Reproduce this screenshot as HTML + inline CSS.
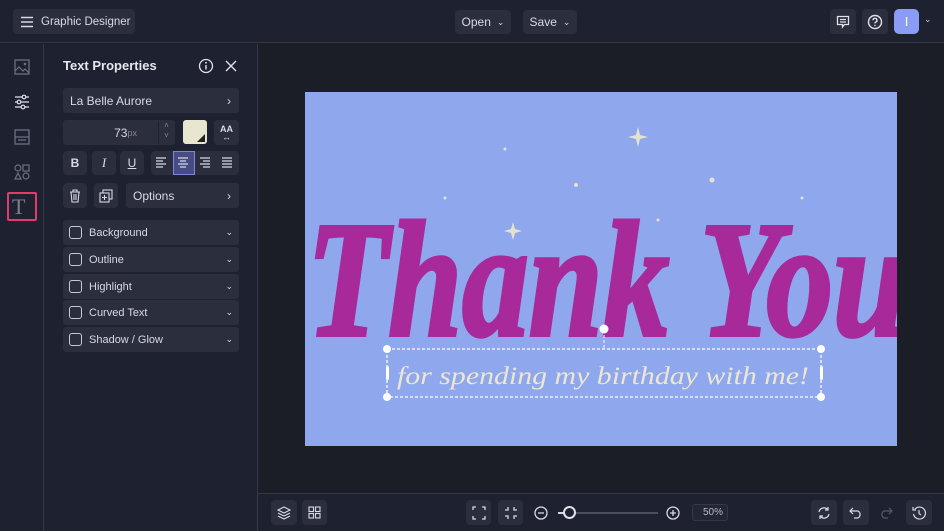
<!DOCTYPE html>
<html><head><style>
*{box-sizing:border-box;margin:0;padding:0}
body{width:944px;height:531px;background:#1b1d27;font-family:"Liberation Sans",sans-serif;color:#d8dae3;position:relative;overflow:hidden;font-size:12px;white-space:nowrap}
.abs{position:absolute}
.btn{position:absolute;background:#2a2e3d;border-radius:4px;display:flex;align-items:center;justify-content:center;color:#d8dae3}
.row{position:absolute;left:63px;width:176px;height:25px;background:#2a2e3d;border-radius:3px;display:flex;align-items:center;font-size:11px;color:#d8dae3}
.cb{width:13px;height:13px;border:1.5px solid #c8cad3;border-radius:3px;margin:0 7px 0 6px}
.chev{position:absolute;right:6px;top:7px}
</style></head><body>
<div class="abs" style="left:0;top:0;width:944px;height:43px;background:#1e2130;border-bottom:1px solid #333747"></div>
<div class="btn" style="left:13px;top:9px;width:122px;height:25px;justify-content:flex-start;padding-left:7px;font-size:11.5px">
<svg width="14" height="12" viewBox="0 0 14 12" style="margin-right:7px"><path d="M1 1.5h12M1 6h12M1 10.5h12" stroke="#d8dae3" stroke-width="1.5"/></svg>Graphic Designer</div>
<div class="btn" style="left:455px;top:10px;width:56px;height:24px;font-size:12px">Open <span style="margin-left:6px;font-size:9px">&#8964;</span></div>
<div class="btn" style="left:523px;top:10px;width:54px;height:24px;font-size:12px">Save <span style="margin-left:6px;font-size:9px">&#8964;</span></div>
<div class="btn" style="left:830px;top:9px;width:26px;height:25px"><svg width="14" height="14" viewBox="0 0 14 14"><path d="M1.5 1.5h11v8h-4l-2 2.5v-2.5h-5z M4 4.5h6M4 7h6" fill="none" stroke="#e0e2ea" stroke-width="1.3"/></svg></div>
<div class="btn" style="left:862px;top:9px;width:26px;height:25px"><svg width="16" height="16" viewBox="0 0 16 16"><circle cx="8" cy="8" r="6.5" fill="none" stroke="#e0e2ea" stroke-width="1.4"/><path d="M6 6.3a2 2 0 1 1 2.6 1.9c-.5.2-.6.5-.6 1.2" fill="none" stroke="#e0e2ea" stroke-width="1.4"/><circle cx="8" cy="11.4" r=".8" fill="#e0e2ea"/></svg></div>
<div class="abs" style="left:894px;top:9px;width:25px;height:25px;background:#8a9cf5;border-radius:5px;color:#fff;display:flex;align-items:center;justify-content:center;font-size:13px">I</div>
<div class="abs" style="left:924px;top:14px;font-size:9px;color:#ccc">&#8964;</div>
<div class="abs" style="left:0;top:44px;width:44px;height:487px;background:#1e2130;border-right:1px solid #333747"></div>
<svg class="abs" style="left:14px;top:59px" width="16" height="16" viewBox="0 0 16 16"><rect x="1" y="1" width="14" height="14" fill="none" stroke="#6b7080" stroke-width="1.3"/><path d="M1 12l4-4 4 4 2-2 4 4" fill="none" stroke="#6b7080" stroke-width="1.2"/><circle cx="11" cy="5" r="1.3" fill="#6b7080"/></svg>
<svg class="abs" style="left:14px;top:94px" width="16" height="16" viewBox="0 0 16 16"><path d="M1 3h14M1 8h14M1 13h14" stroke="#e0e2ea" stroke-width="1.3"/><circle cx="10" cy="3" r="1.8" fill="#1e2130" stroke="#e0e2ea" stroke-width="1.2"/><circle cx="5" cy="8" r="1.8" fill="#1e2130" stroke="#e0e2ea" stroke-width="1.2"/><circle cx="9" cy="13" r="1.8" fill="#1e2130" stroke="#e0e2ea" stroke-width="1.2"/></svg>
<svg class="abs" style="left:14px;top:129px" width="16" height="16" viewBox="0 0 16 16"><rect x="1" y="1" width="14" height="14" fill="none" stroke="#6b7080" stroke-width="1.3"/><path d="M1 8h14M4 11h8" stroke="#6b7080" stroke-width="1.2"/></svg>
<svg class="abs" style="left:14px;top:164px" width="16" height="16" viewBox="0 0 16 16"><circle cx="4" cy="4" r="3" fill="none" stroke="#6b7080" stroke-width="1.2"/><rect x="9" y="1" width="6" height="6" fill="none" stroke="#6b7080" stroke-width="1.2"/><path d="M4 9l3 6H1z" fill="none" stroke="#6b7080" stroke-width="1.2"/><circle cx="12" cy="12" r="3" fill="none" stroke="#6b7080" stroke-width="1.2"/></svg>
<div class="abs" style="left:7px;top:192px;width:30px;height:29px;border:2px solid #e23b6e;border-radius:2px"></div>
<div class="abs" style="left:12px;top:194px;font-family:'Liberation Serif',serif;font-size:22px;color:#7c8190">T</div>
<div class="abs" style="left:44px;top:44px;width:214px;height:487px;background:#1e2130;border-right:1px solid #333747"></div>
<div class="abs" style="left:63px;top:58px;font-size:13px;font-weight:bold;color:#e6e8ef">Text Properties</div>
<svg class="abs" style="left:198px;top:58px" width="16" height="16" viewBox="0 0 16 16"><circle cx="8" cy="8" r="6.5" fill="none" stroke="#e0e2ea" stroke-width="1.3"/><path d="M8 7v4.5" stroke="#e0e2ea" stroke-width="1.4"/><circle cx="8" cy="4.8" r=".9" fill="#e0e2ea"/></svg>
<svg class="abs" style="left:225px;top:60px" width="12" height="12" viewBox="0 0 12 12"><path d="M1 1l10 10M11 1L1 11" stroke="#e0e2ea" stroke-width="1.4"/></svg>
<div class="row" style="top:88px;height:25px;padding-left:7px;font-size:12px">La Belle Aurore<span style="position:absolute;right:8px">›</span></div>
<div class="row" style="top:120px;width:112px;height:25px;justify-content:flex-end;padding-right:38px;font-size:12px">73<span style="font-size:9px;color:#888">px</span></div>
<div class="abs" style="left:158px;top:121px;width:16px;height:23px;border-left:1px solid #1e2130;color:#888;font-size:8px;text-align:center;line-height:10px">˄<br>˅</div>
<div class="abs" style="left:183px;top:120px;width:24px;height:24px;background:#e8e6cf;border-radius:3px"></div>
<div class="abs" style="left:197px;top:134px;width:0;height:0;border-left:8px solid transparent;border-bottom:8px solid #222"></div>
<div class="btn" style="left:214px;top:120px;width:25px;height:25px;font-size:9px;font-weight:bold;flex-direction:column;line-height:8px">AA<span style="font-size:9px">&#8596;</span></div>
<div class="btn" style="left:63px;top:151px;width:24px;height:24px;font-weight:bold;font-size:12px">B</div>
<div class="btn" style="left:92px;top:151px;width:24px;height:24px;font-family:'Liberation Serif',serif;font-style:italic;font-size:13px">I</div>
<div class="btn" style="left:120px;top:151px;width:24px;height:24px;text-decoration:underline;font-size:12px">U</div>
<div class="btn" style="left:151px;top:151px;width:88px;height:24px"></div>
<div class="abs" style="left:173px;top:151px;width:22px;height:24px;background:#474c85;border:1px solid #7d85d8"></div>
<svg class="abs" style="left:155px;top:156px" width="82" height="14" viewBox="0 0 82 14"><g stroke="#d8dae3" stroke-width="1.2"><path d="M1 2h10M1 5h7M1 8h10M1 11h7"/><path d="M23 2h10M25 5h6M23 8h10M25 11h6"/><path d="M45 2h10M48 5h7M45 8h10M48 11h7"/><path d="M67 2h10M67 5h10M67 8h10M67 11h10"/></g></svg>
<div class="btn" style="left:63px;top:183px;width:24px;height:25px"><svg width="12" height="14" viewBox="0 0 12 14"><path d="M1 3h10M4 3V1h4v2M2 3l1 10h6l1-10M5 5v6M7 5v6" fill="none" stroke="#d8dae3" stroke-width="1.1"/></svg></div>
<div class="btn" style="left:94px;top:183px;width:24px;height:25px"><svg width="14" height="14" viewBox="0 0 14 14"><rect x="4" y="1" width="9" height="9" fill="none" stroke="#d8dae3" stroke-width="1.1"/><rect x="1" y="4" width="9" height="9" fill="#2a2e3d" stroke="#d8dae3" stroke-width="1.1"/><path d="M5.5 6v5M3 8.5h5" stroke="#d8dae3" stroke-width="1.1"/></svg></div>
<div class="row" style="left:126px;top:183px;width:113px;height:25px;padding-left:7px;font-size:12px">Options<span style="position:absolute;right:8px">›</span></div>
<div class="row" style="top:220px"><div class="cb"></div>Background<span class="chev" style="font-size:9px">&#8964;</span></div>
<div class="row" style="top:247px"><div class="cb"></div>Outline<span class="chev" style="font-size:9px">&#8964;</span></div>
<div class="row" style="top:274px"><div class="cb"></div>Highlight<span class="chev" style="font-size:9px">&#8964;</span></div>
<div class="row" style="top:300px"><div class="cb"></div>Curved Text<span class="chev" style="font-size:9px">&#8964;</span></div>
<div class="row" style="top:327px"><div class="cb"></div>Shadow / Glow<span class="chev" style="font-size:9px">&#8964;</span></div>
<div class="abs" style="left:305px;top:92px;width:592px;height:354px;background:#8fa7ec;overflow:hidden">
<svg width="592" height="354" viewBox="0 0 592 354">
<g fill="#e7e2cf">
<path d="M333 35l2 8 8 2-8 2-2 8-2-8-8-2 8-2z"/>
<path d="M208 130l2 7 7 2-7 2-2 7-2-7-7-2 7-2z"/>
<circle cx="271" cy="93" r="2"/><circle cx="407" cy="88" r="2.5"/><circle cx="200" cy="57" r="1.5"/><circle cx="140" cy="106" r="1.5"/><circle cx="353" cy="128" r="1.5"/><circle cx="497" cy="106" r="1.5"/>
</g>
<text x="2" y="243" font-family="Liberation Serif" font-style="italic" font-weight="bold" font-size="165" fill="#a8299a" stroke="#a8299a" stroke-width="4" textLength="600" lengthAdjust="spacingAndGlyphs">Thank You</text>
<text x="92" y="292" font-family="Liberation Serif" font-style="italic" font-size="25" fill="#ece7d3" textLength="412" lengthAdjust="spacingAndGlyphs">for spending my birthday with me!</text>
<rect x="82" y="257" width="434" height="48" fill="none" stroke="#fff" stroke-width="1.3" stroke-dasharray="3 2"/>
<path d="M299 243v14" stroke="#fff" stroke-dasharray="3 2"/>
<g fill="#fff"><circle cx="299" cy="237" r="4.5"/><circle cx="82" cy="257" r="4"/><circle cx="516" cy="257" r="4"/><circle cx="82" cy="305" r="4"/><circle cx="516" cy="305" r="4"/><rect x="81" y="274" width="3" height="14" rx="1.5"/><rect x="515" y="274" width="3" height="14" rx="1.5"/></g>
</svg></div>
<div class="abs" style="left:258px;top:493px;width:686px;height:38px;background:#1e2130;border-top:1px solid #333747"></div>
<div class="btn" style="left:271px;top:500px;width:26px;height:25px"><svg width="14" height="14" viewBox="0 0 14 14"><path d="M7 1l6 3-6 3-6-3z M1 7l6 3 6-3M1 10l6 3 6-3" fill="none" stroke="#d8dae3" stroke-width="1.1"/></svg></div>
<div class="btn" style="left:302px;top:500px;width:25px;height:25px"><svg width="13" height="13" viewBox="0 0 13 13"><g fill="none" stroke="#d8dae3" stroke-width="1.1"><rect x="1" y="1" width="4.5" height="4.5"/><rect x="7.5" y="1" width="4.5" height="4.5"/><rect x="1" y="7.5" width="4.5" height="4.5"/><rect x="7.5" y="7.5" width="4.5" height="4.5"/></g></svg></div>
<div class="btn" style="left:466px;top:500px;width:25px;height:25px"><svg width="14" height="14" viewBox="0 0 14 14"><path d="M1 4V1h3M10 1h3v3M13 10v3h-3M4 13H1v-3" fill="none" stroke="#d8dae3" stroke-width="1.3"/></svg></div>
<div class="btn" style="left:498px;top:500px;width:25px;height:25px"><svg width="14" height="14" viewBox="0 0 14 14"><path d="M1 4h3V1M10 1v3h3M13 10h-3v3M4 13v-3H1" fill="none" stroke="#d8dae3" stroke-width="1.3"/></svg></div>
<svg class="abs" style="left:533px;top:505px" width="16" height="16" viewBox="0 0 16 16"><circle cx="8" cy="8" r="6" fill="none" stroke="#d8dae3" stroke-width="1.3"/><path d="M5 8h6" stroke="#d8dae3" stroke-width="1.3"/></svg>
<div class="abs" style="left:558px;top:512px;width:100px;height:2px;background:#4a4f60"></div>
<div class="abs" style="left:558px;top:512px;width:8px;height:2px;background:#d8dae3"></div>
<div class="abs" style="left:563px;top:506px;width:13px;height:13px;border:2px solid #e0e2ea;border-radius:50%;background:#1e2130"></div>
<svg class="abs" style="left:665px;top:505px" width="16" height="16" viewBox="0 0 16 16"><circle cx="8" cy="8" r="6" fill="none" stroke="#d8dae3" stroke-width="1.3"/><path d="M5 8h6M8 5v6" stroke="#d8dae3" stroke-width="1.3"/></svg>
<div class="abs" style="left:692px;top:504px;width:36px;height:17px;background:#232634;border:1px solid #333747;border-radius:3px;font-size:10px;color:#b8bac3;text-align:right;padding-right:4px;line-height:15px">50%</div>
<div class="btn" style="left:811px;top:500px;width:26px;height:25px"><svg width="14" height="14" viewBox="0 0 14 14"><path d="M2 6a5 5 0 0 1 9-2M12 8a5 5 0 0 1-9 2M11 1v3H8M3 13v-3h3" fill="none" stroke="#d8dae3" stroke-width="1.2"/></svg></div>
<div class="btn" style="left:843px;top:500px;width:26px;height:25px"><svg width="14" height="12" viewBox="0 0 14 12"><path d="M4 1L1 4l3 3M1 4h8a4 4 0 0 1 0 7H5" fill="none" stroke="#d8dae3" stroke-width="1.2"/></svg></div>
<svg class="abs" style="left:879px;top:507px" width="14" height="12" viewBox="0 0 14 12"><path d="M10 1l3 3-3 3M13 4H5a4 4 0 0 0 0 7h4" fill="none" stroke="#555a6a" stroke-width="1.2"/></svg>
<div class="btn" style="left:906px;top:500px;width:26px;height:25px"><svg width="14" height="14" viewBox="0 0 14 14"><path d="M3 3a6 6 0 1 1-1.5 5M1 1v3h3M7 4v3.5l2 1.5" fill="none" stroke="#d8dae3" stroke-width="1.2"/></svg></div>
</body></html>
